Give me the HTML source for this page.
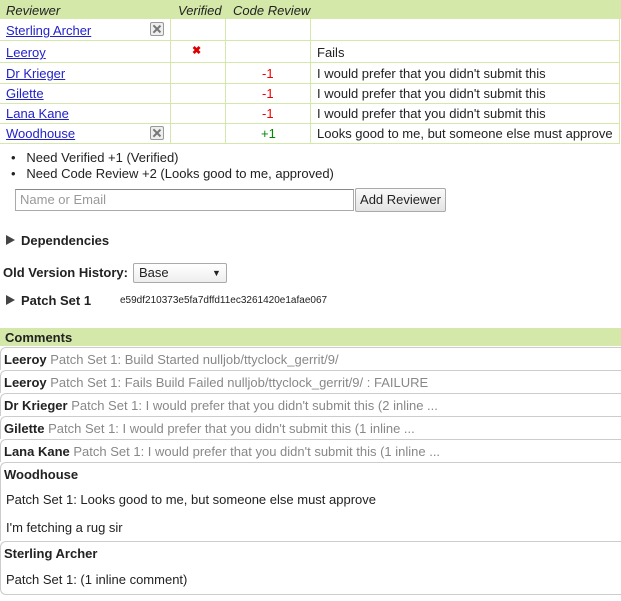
<!DOCTYPE html>
<html><head><style>
body{margin:0;width:621px;height:601px;background:#fff;font-family:"Liberation Sans",Arial,sans-serif;font-size:13px;color:#222;position:relative;overflow:hidden}
.a{position:absolute;white-space:nowrap}
.hl{position:absolute;height:1px;background:#d4e9a9}
.vl{position:absolute;width:1px;background:#d4e9a9}
a{color:#2222cc;text-decoration:underline}
.x{position:absolute;width:12px;height:12px;border:1px solid #999;background:#eee;border-radius:2px}
.x:before,.x:after{content:"";position:absolute;left:5px;top:1px;width:1.5px;height:10px;background:#777}
.x:before{transform:rotate(45deg)}.x:after{transform:rotate(-45deg)}
.red{color:#e00}.grn{color:#080}
.cm{position:absolute;left:0;width:622px;border-top:1px solid #ccc;border-left:1px solid #ccc;border-radius:6px 0 0 0}
.g{color:#888}
b{font-weight:bold}
.tri{display:inline-block;width:0;height:0;border-left:9px solid #444;border-top:5px solid transparent;border-bottom:5px solid transparent;margin-right:6px}
</style></head><body>
<div class="a" style="left:0;top:0;width:621px;height:19px;background:#d4e9a9"></div>
<div class="a" style="left:6px;top:3px;font-style:italic">Reviewer</div>
<div class="a" style="left:178px;top:3px;font-style:italic">Verified</div>
<div class="a" style="left:233px;top:3px;font-style:italic">Code Review</div>
<div class="hl" style="left:0;top:40px;width:620px"></div>
<div class="hl" style="left:0;top:62px;width:620px"></div>
<div class="hl" style="left:0;top:83px;width:620px"></div>
<div class="hl" style="left:0;top:103px;width:620px"></div>
<div class="hl" style="left:0;top:123px;width:620px"></div>
<div class="hl" style="left:0;top:143px;width:620px"></div>
<div class="vl" style="left:170px;top:19px;height:125px"></div>
<div class="vl" style="left:225px;top:19px;height:125px"></div>
<div class="vl" style="left:310px;top:19px;height:125px"></div>
<div class="vl" style="left:619px;top:19px;height:125px"></div>
<div class="a" style="left:6px;top:23px"><a>Sterling Archer</a></div>
<div class="x" style="left:150px;top:22px"></div>
<div class="a" style="left:6px;top:45px"><a>Leeroy</a></div>
<div class="a red" style="left:192px;top:44px;font-weight:bold;font-size:11px;color:#d00">✖</div>
<div class="a" style="left:317px;top:45px">Fails</div>
<div class="a" style="left:6px;top:66px"><a>Dr Krieger</a></div>
<div class="a red" style="left:262px;top:66px">-1</div>
<div class="a" style="left:317px;top:66px">I would prefer that you didn't submit this</div>
<div class="a" style="left:6px;top:86px"><a>Gilette</a></div>
<div class="a red" style="left:262px;top:86px">-1</div>
<div class="a" style="left:317px;top:86px">I would prefer that you didn't submit this</div>
<div class="a" style="left:6px;top:106px"><a>Lana Kane</a></div>
<div class="a red" style="left:262px;top:106px">-1</div>
<div class="a" style="left:317px;top:106px">I would prefer that you didn't submit this</div>
<div class="a" style="left:6px;top:126px"><a>Woodhouse</a></div>
<div class="x" style="left:150px;top:126px"></div>
<div class="a grn" style="left:261px;top:126px">+1</div>
<div class="a" style="left:317px;top:126px">Looks good to me, but someone else must approve</div>
<div class="a" style="left:11px;top:150px">•&nbsp;&nbsp; Need Verified +1 (Verified)</div>
<div class="a" style="left:11px;top:166px">•&nbsp;&nbsp; Need Code Review +2 (Looks good to me, approved)</div>
<div class="a" style="left:15px;top:189px;height:20px;border:1px solid #aaa;border-top-color:#888;color:#999;line-height:20px;padding-left:4px;width:333px">Name or Email</div>
<div class="a" style="left:355px;top:188px;width:89px;height:22px;border:1px solid #aaa;background:linear-gradient(#fafafa,#e4e4e4);border-radius:2px;line-height:22px;text-align:center">Add Reviewer</div>
<div class="a" style="left:6px;top:233px;font-weight:bold"><span class="tri"></span>Dependencies</div>
<div class="a" style="left:3px;top:265px;font-weight:bold">Old Version History:</div>
<div class="a" style="left:133px;top:263px;border:1px solid #aaa;border-radius:2px;background:linear-gradient(#fff,#eee);line-height:18px;padding-left:5px;box-sizing:border-box;width:94px;height:20px">Base<span style="position:absolute;left:78px;top:0;font-size:9px">▼</span></div>
<div class="a" style="left:6px;top:293px;font-weight:bold"><span class="tri"></span>Patch Set 1</div>
<div class="a" style="left:120px;top:295px;font-size:10px">e59df210373e5fa7dffd11ec3261420e1afae067</div>
<div class="a" style="left:0;top:328px;width:621px;height:18px;background:#d4e9a9"></div>
<div class="a" style="left:5px;top:330px;font-weight:bold">Comments</div>
<div class="cm" style="top:347px;height:22px"></div>
<div class="a" style="left:4px;top:352px"><b>Leeroy</b> <span class="g">Patch Set 1: Build Started nulljob/ttyclock_gerrit/9/</span></div>
<div class="cm" style="top:370px;height:22px"></div>
<div class="a" style="left:4px;top:375px"><b>Leeroy</b> <span class="g">Patch Set 1: Fails Build Failed nulljob/ttyclock_gerrit/9/ : FAILURE</span></div>
<div class="cm" style="top:393px;height:22px"></div>
<div class="a" style="left:4px;top:398px"><b>Dr Krieger</b> <span class="g">Patch Set 1: I would prefer that you didn't submit this (2 inline ...</span></div>
<div class="cm" style="top:416px;height:22px"></div>
<div class="a" style="left:4px;top:421px"><b>Gilette</b> <span class="g">Patch Set 1: I would prefer that you didn't submit this (1 inline ...</span></div>
<div class="cm" style="top:439px;height:22px"></div>
<div class="a" style="left:4px;top:444px"><b>Lana Kane</b> <span class="g">Patch Set 1: I would prefer that you didn't submit this (1 inline ...</span></div>
<div class="cm" style="top:462px;height:78px"></div>
<div class="a" style="left:4px;top:467px"><b>Woodhouse</b></div>
<div class="a" style="left:6px;top:492px">Patch Set 1: Looks good to me, but someone else must approve</div>
<div class="a" style="left:6px;top:520px">I'm fetching a rug sir</div>
<div class="cm" style="top:541px;border-bottom:1px solid #ccc;border-radius:6px 0 0 6px;height:52px"></div>
<div class="a" style="left:4px;top:546px"><b>Sterling Archer</b></div>
<div class="a" style="left:6px;top:572px">Patch Set 1: (1 inline comment)</div>
</body></html>
